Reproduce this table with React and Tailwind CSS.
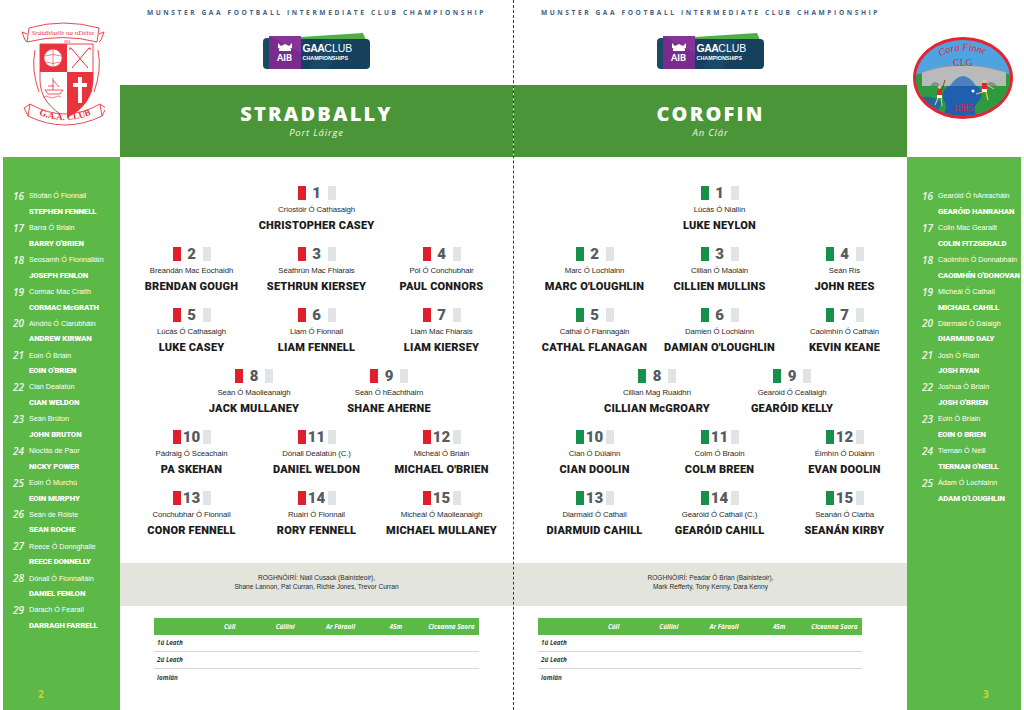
import React from 'react'

const stradbally = {
  name: 'STRADBALLY',
  county: 'Port Láirge',
  players: [
    [1, 'Críostóir Ó Cathasaigh', 'CHRISTOPHER CASEY'],
    [2, 'Breandán Mac Eochaidh', 'BRENDAN GOUGH'],
    [3, 'Séathrún Mac Fhiarais', 'SETHRUN KIERSEY'],
    [4, 'Pól Ó Conchubhair', 'PAUL CONNORS'],
    [5, 'Lúcás Ó Cathasaigh', 'LUKE CASEY'],
    [6, 'Liam Ó Fionnail', 'LIAM FENNELL'],
    [7, 'Liam Mac Fhiarais', 'LIAM KIERSEY'],
    [8, 'Seán Ó Maoileanaigh', 'JACK MULLANEY'],
    [9, 'Seán Ó hEachthairn', 'SHANE AHERNE'],
    [10, 'Pádraig Ó Sceachain', 'PA SKEHAN'],
    [11, 'Dónall Dealatún (C.)', 'DANIEL WELDON'],
    [12, 'Micheál Ó Briain', "MICHAEL O'BRIEN"],
    [13, 'Conchubhar Ó Fionnail', 'CONOR FENNELL'],
    [14, 'Ruairí Ó Fionnail', 'RORY FENNELL'],
    [15, 'Micheál Ó Maoileanaigh', 'MICHAEL MULLANEY'],
  ],
  subs: [
    [16, 'Stiofán Ó Fionnail', 'STEPHEN FENNELL'],
    [17, 'Barra Ó Briain', "BARRY O'BRIEN"],
    [18, 'Seosamh Ó Fionnalláin', 'JOSEPH FENLON'],
    [19, 'Cormac Mac Craith', 'CORMAC McGRATH'],
    [20, 'Aindriú Ó Ciarubháin', 'ANDREW KIRWAN'],
    [21, 'Eoin Ó Briain', "EOIN O'BRIEN"],
    [22, 'Cian Dealatún', 'CIAN WELDON'],
    [23, 'Seán Brúton', 'JOHN BRUTON'],
    [24, 'Nioclás de Paor', 'NICKY POWER'],
    [25, 'Eoin Ó Murchú', 'EOIN MURPHY'],
    [26, 'Seán de Róiste', 'SEAN ROCHE'],
    [27, 'Reece Ó Donnghaile', 'REECE DONNELLY'],
    [28, 'Dónall Ó Fionnalláin', 'DANIEL FENLON'],
    [29, 'Darach Ó Fearail', 'DARRAGH FARRELL'],
  ],
  selectors: ['ROGHNÓIRÍ: Niall Cusack  (Bainisteoir),', 'Shane Lannon, Pat Curran, Richie Jones, Trevor Curran'],
}

const corofin = {
  name: 'COROFIN',
  county: 'An Clár',
  players: [
    [1, 'Lúcás Ó Niallín', 'LUKE NEYLON'],
    [2, 'Marc Ó Lochlainn', "MARC O'LOUGHLIN"],
    [3, 'Cillian Ó Maoláin', 'CILLIEN MULLINS'],
    [4, 'Seán Rís', 'JOHN REES'],
    [5, 'Cathal Ó Flannagáin', 'CATHAL FLANAGAN'],
    [6, 'Damien Ó Lochlainn', "DAMIAN O'LOUGHLIN"],
    [7, 'Caoimhín Ó Catháin', 'KEVIN KEANE'],
    [8, 'Cillian Mag Ruaidhrí', 'CILLIAN McGROARY'],
    [9, 'Gearóid Ó Ceallaigh', 'GEARÓID KELLY'],
    [10, 'Cian Ó Dúlainn', 'CIAN DOOLIN'],
    [11, 'Colm Ó Braoin', 'COLM BREEN'],
    [12, 'Éimhín Ó Dúlainn', 'EVAN DOOLIN'],
    [13, 'Diarmaid Ó Cathail', 'DIARMUID CAHILL'],
    [14, 'Gearóid Ó Cathail (C.)', 'GEARÓID CAHILL'],
    [15, 'Seanán Ó Ciarba', 'SEANÁN KIRBY'],
  ],
  subs: [
    [16, 'Gearóid Ó hAnracháin', 'GEARÓID HANRAHAN'],
    [17, 'Colin Mac Gearailt', 'COLIN FITZGERALD'],
    [18, 'Caoimhín Ó Donnabháin', "CAOIMHÍN O'DONOVAN"],
    [19, 'Micheál Ó Cathail', 'MICHAEL CAHILL'],
    [20, 'Diarmaid Ó Dálaigh', 'DIARMUID DALY'],
    [21, 'Josh Ó Riain', 'JOSH RYAN'],
    [22, 'Joshua Ó Briain', "JOSH O'BRIEN"],
    [23, 'Eoin Ó Briain', 'EOIN O BRIEN'],
    [24, 'Tiernan Ó Néill', "TIERNAN O'NEILL"],
    [25, 'Ádam Ó Lochlainn', "ADAM O'LOUGHLIN"],
  ],
  selectors: ['ROGHNÓIRÍ: Peadar Ó Brian (Bainisteoir),', 'Mark Refferty, Tony Kenny, Dara Kenny'],
}

const statCols = ['Cúil', 'Cúilíní', 'Ar Fóraoil', '45m', 'Ciceanna Saora']
const statRows = ['1ú Leath', '2ú Leath', 'Iomlán']

const Player = ({ p, accent }) => (
  <div className="flex flex-col items-center">
    <div className="flex h-[14px] items-center">
      <span className={`h-[14px] w-[8px] ${accent}`} />
      <span className="w-[22px] text-center font-['Roboto',sans-serif] text-[15px] font-black leading-none text-[#565b60]">
        {p[0]}
      </span>
      <span className="h-[14px] w-[8px] bg-[#e2e3e5]" />
    </div>
    <div className="mt-[1px] h-[17px] whitespace-nowrap font-['Liberation_Sans',sans-serif] text-[7.8px] leading-[17px] tracking-[-0.1px] text-[#2a2a2a]">
      {p[1]}
    </div>
    <div className="h-[15px] whitespace-nowrap font-['Roboto',sans-serif] text-[11px] font-black leading-[15px] tracking-[0.2px] text-[#1c1c1c]">
      {p[2]}
    </div>
  </div>
)

const Lineup = ({ players, accent, pad }) => (
  <div className={`flex h-[406px] flex-col gap-[14px] pt-[29px] ${pad}`}>
    <div className="grid grid-cols-3">
      <div className="col-start-2">
        <Player p={players[0]} accent={accent} />
      </div>
    </div>
    {[1, 4].map((s) => (
      <div key={s} className="grid grid-cols-3">
        {players.slice(s, s + 3).map((p) => (
          <Player key={p[0]} p={p} accent={accent} />
        ))}
      </div>
    ))}
    <div className="grid grid-cols-6">
      <div className="col-span-2 col-start-2">
        <Player p={players[7]} accent={accent} />
      </div>
      <div className="col-span-2 pl-[20px]">
        <Player p={players[8]} accent={accent} />
      </div>
    </div>
    {[9, 12].map((s) => (
      <div key={s} className="grid grid-cols-3">
        {players.slice(s, s + 3).map((p) => (
          <Player key={p[0]} p={p} accent={accent} />
        ))}
      </div>
    ))}
  </div>
)

const Subs = ({ subs }) => (
  <div className="flex flex-col pt-[31.5px]">
    {subs.map((s) => (
      <div key={s[0]} className="h-[31.85px]">
        <div className="flex h-[15px] items-center">
          <span className="w-[16px] font-['Open_Sans',sans-serif] text-[10px] font-semibold italic leading-none text-white/90">
            {s[0]}
          </span>
          <span className="whitespace-nowrap font-['Liberation_Sans',sans-serif] text-[7.2px] leading-none text-white">
            {s[1]}
          </span>
        </div>
        <div className="flex h-[16.85px] items-center whitespace-nowrap pl-[16px] font-['Roboto',sans-serif] text-[7.8px] font-black leading-none tracking-[-0.1px] text-white">
          {s[2]}
        </div>
      </div>
    ))}
  </div>
)

const AibLogo = () => (
  <div className="relative h-[37px] w-[108px]">
    <svg width="108" height="37" viewBox="0 0 108 37" className="absolute left-0 top-0">
      <path d="M38 4 L100 0 L103 7 L38 8 Z" fill="#4fae48" />
      <rect x="30" y="6" width="77" height="30" rx="4" fill="#17405c" />
      <path d="M60 6 L80 6 L66 36 L46 36 Z" fill="#1d4d6b" opacity="0.7" />
      <rect x="0" y="5" width="12" height="31" rx="4" fill="#1b4a63" />
      <rect x="6" y="3" width="32" height="33" fill="#7a2b8e" />
      <path d="M6 3 L38 3 L38 20 Z" fill="#8d3a9e" opacity="0.6" />
      <path d="M15 10 L18 13 L22 11 L26 13 L29 10 L29 15 Q22 19 15 15 Z" fill="#fff" />
      <rect x="16" y="16" width="12" height="2" fill="#fff" />
    </svg>
    <span className="absolute left-[8px] top-[20px] w-[28px] text-center font-['Lato',sans-serif] text-[9px] font-black leading-none text-white">
      AIB
    </span>
    <span className="absolute left-[40px] top-[10px] font-['Liberation_Sans',sans-serif] text-[10.5px] leading-none text-white">
      <b className="tracking-[-0.5px]">GAA</b>CLUB
    </span>
    <span className="absolute left-[40px] top-[23px] font-['Liberation_Sans',sans-serif] text-[5.4px] font-bold leading-none text-white">
      CHAMPIONSHIPS
    </span>
  </div>
)

const StradballyCrest = () => (
  <svg width="84" height="108" viewBox="0 0 84 108">
    <g fill="none" stroke="#e8323c" strokeWidth="0.9">
      <path d="M8 8 Q42 -2 78 8 L76 22 Q42 13 6 22 Z" fill="#fff" />
      <path d="M6 14 L1 12 L4 20 L6 22" />
      <path d="M78 14 L83 12 L80 20 L78 22" />
      <path d="M19 24 L72 24 L72 60 Q72 84 46 98 Q19 84 19 60 Z" fill="#fff" />
      <path d="M14 30 Q10 50 18 72" />
      <path d="M77 30 Q81 50 73 72" />
      <path d="M9 84 Q44 104 79 84 L81 96 Q44 114 7 96 Z" fill="#fff" />
      <path d="M9 84 L3 88 L7 96" />
      <path d="M79 84 L85 88 L81 96" />
    </g>
    <text x="42" y="15" textAnchor="middle" fontSize="7" fill="#e8323c" fontFamily="Liberation Serif, serif" fontStyle="italic">
      Sráidbhaile na nDéise
    </text>
    <text x="46" y="23" textAnchor="middle" fontSize="3" fill="#e8323c" fontFamily="Liberation Sans, sans-serif">
      1884
    </text>
    <rect x="19" y="24" width="27" height="28" fill="#e8323c" />
    <path d="M46 52 L72 52 L72 60 Q72 84 46 98 Z" fill="#e8323c" />
    <circle cx="32" cy="38" r="9" fill="#fff" stroke="#e8323c" strokeWidth="0.6" />
    <path d="M24 36 Q32 33 40 36 M25 42 Q32 45 39 42 M32 29 L32 47" stroke="#e8323c" strokeWidth="0.6" fill="none" />
    <path d="M50 28 L67 48 M68 28 L51 48 M50 28 Q48 27 49 30 M68 28 Q70 27 69 30" stroke="#e8323c" strokeWidth="1" fill="none" />
    <path d="M24 70 L42 70 L39 74 L27 74 Z M32 58 L32 70 M32 60 L38 67 M27 66 L33 66" stroke="#e8323c" strokeWidth="0.8" fill="none" />
    <path d="M22 77 Q25 75 28 77 Q31 79 34 77 Q37 75 40 77" stroke="#e8323c" strokeWidth="0.6" fill="none" />
    <rect x="57" y="57" width="4" height="26" fill="#fff" />
    <rect x="52" y="63" width="14" height="4" fill="#fff" />
    <path id="gaaArc" d="M12 92 Q44 108 76 92" fill="none" />
    <text fontSize="9" fill="#e8323c" fontFamily="Liberation Serif, serif" fontWeight="bold">
      <textPath href="#gaaArc" startOffset="50%" textAnchor="middle">
        G.A.A. CLUB
      </textPath>
    </text>
  </svg>
)

const CorofinCrest = () => (
  <svg width="102" height="84" viewBox="0 0 102 84">
    <defs>
      <clipPath id="oval">
        <ellipse cx="51" cy="42" rx="47" ry="38" />
      </clipPath>
    </defs>
    <ellipse cx="51" cy="42" rx="50" ry="41" fill="#e32431" />
    <g clipPath="url(#oval)">
      <rect x="0" y="0" width="102" height="84" fill="#4fa3e0" />
      <path d="M0 40 Q15 34 26 42 L0 60 Z" fill="#2f9a3d" />
      <path d="M102 40 Q88 34 78 42 L102 62 Z" fill="#2f9a3d" />
      <path d="M0 46 L102 46 L102 84 L0 84 Z" fill="#2f9a3d" />
      <path d="M10 36 Q51 22 94 36 L94 50 L10 50 Z" fill="#b9babc" />
      <path d="M10 36 Q51 22 94 36" stroke="#8f9093" strokeWidth="0.8" fill="none" />
      <path d="M38 50 Q51 30 64 50 Z" fill="#4b7fc0" />
      <path d="M18 50 Q23 42 29 50 Z M73 50 Q79 42 85 50 Z" fill="#8c8d90" />
      <path d="M36 50 L66 50 Q74 60 64 68 Q60 76 68 84 L26 84 Q38 74 32 64 Q28 56 36 50 Z" fill="#1f5fae" />
      <path d="M0 62 Q20 58 30 66 L22 84 L0 84 Z" fill="#1f5fae" opacity="0.85" />
    </g>
    <g>
      <rect x="25" y="53" width="5" height="6" fill="#e32431" />
      <rect x="25" y="59" width="5" height="3" fill="#fff" />
      <circle cx="27.5" cy="51" r="1.8" fill="#f0c090" />
      <path d="M26 62 L23 69 M29 62 L30 70" stroke="#f0c090" strokeWidth="1.1" />
      <path d="M30 54 L33 44" stroke="#5b3a1a" strokeWidth="0.8" />
      <rect x="70" y="47" width="5" height="6" fill="#e32431" />
      <rect x="70" y="53" width="5" height="3" fill="#fff" />
      <circle cx="72.5" cy="45" r="1.8" fill="#f0c090" />
      <path d="M71 56 L64 58 M74 56 L76 64" stroke="#e8d020" strokeWidth="1.2" />
      <path d="M75 49 L82 53" stroke="#f0c090" strokeWidth="1" />
      <circle cx="61" cy="55" r="1.5" fill="#fff" />
    </g>
    <path id="coraArc" d="M14 32 Q44 0 90 26" fill="none" />
    <text fontSize="10" fill="#e32431" fontFamily="Liberation Serif, serif" fontStyle="italic">
      <textPath href="#coraArc" startOffset="50%" textAnchor="middle">
        Cora Finne
      </textPath>
    </text>
    <text x="51" y="30" textAnchor="middle" fontSize="10" fill="#e32431" fontFamily="Liberation Serif, serif">
      CLG
    </text>
    <text x="51" y="75" textAnchor="middle" fontSize="10" fill="#e32431" fontFamily="Liberation Serif, serif">
      1885
    </text>
  </svg>
)

const Header = ({ team }) => (
  <>
    <div className="flex h-[85px] flex-col items-center pt-[9px]">
      <div className="whitespace-nowrap font-['Open_Sans',sans-serif] text-[6.6px] font-bold leading-[8px] tracking-[2.6px] text-[#43627f]">
        MUNSTER GAA FOOTBALL INTERMEDIATE CLUB CHAMPIONSHIP
      </div>
      <div className="mt-[16px]">
        <AibLogo />
      </div>
    </div>
    <div className="flex h-[72px] flex-col items-center bg-[#4a9537] pt-[19px]">
      <div className="font-['Open_Sans',sans-serif] text-[20px] font-extrabold leading-[20px] tracking-[2.2px] text-white">
        {team.name}
      </div>
      <div className="mt-[3px] font-['Open_Sans',sans-serif] text-[9.5px] italic leading-[12px] tracking-[0.8px] text-[#eef5ea]">
        {team.county}
      </div>
    </div>
  </>
)

const Selectors = ({ lines }) => (
  <div className="flex h-[43px] flex-col items-center bg-[#e3e4dc] pt-[9.5px] font-['Liberation_Sans',sans-serif] text-[6.6px] leading-[9.5px] text-[#2b2b2b]">
    {lines.map((l) => (
      <div key={l}>{l}</div>
    ))}
  </div>
)

const StatsTable = ({ className }) => (
  <div className={`mt-[12px] font-['Open_Sans',sans-serif] text-[6.3px] font-bold italic ${className}`}>
    <div className="grid h-[17px] grid-cols-[48px_repeat(5,1fr)] items-center bg-[#5cb947] text-white">
      <span />
      {statCols.map((c) => (
        <span key={c} className="text-center">
          {c}
        </span>
      ))}
    </div>
    {statRows.map((r, i) => (
      <div
        key={r}
        className={`flex h-[17px] items-center pl-[3px] text-[#3a3a3a] ${i < 2 ? 'border-b border-[#d6d6d6]' : ''}`}
      >
        {r}
      </div>
    ))}
  </div>
)

export default function App() {
  return (
    <div className="flex h-[710px] w-[1024px] overflow-hidden bg-white">
      <div className="w-[3px]" />

      {/* left sidebar */}
      <div className="flex w-[117px] flex-col">
        <div className="flex h-[157px] justify-center pt-[20px] pl-[2px]">
          <StradballyCrest />
        </div>
        <div className="flex flex-1 flex-col bg-[#5cb947] pl-[10px]">
          <Subs subs={stradbally.subs} />
          <div className="mt-auto pb-[10px] pl-[25px] font-['Open_Sans',sans-serif] text-[10px] font-bold leading-[12px] text-[#d3cf32]">
            2
          </div>
        </div>
      </div>

      {/* left main */}
      <div className="flex w-[393px] flex-col">
        <Header team={stradbally} />
        <Lineup players={stradbally.players} accent="bg-[#e11f2c]" pad="px-[9px]" />
        <Selectors lines={stradbally.selectors} />
        <StatsTable className="ml-[34px] w-[325px]" />
      </div>

      <div className="w-px border-l border-dashed border-[#3a3a3a]" />

      {/* right main */}
      <div className="flex w-[393px] flex-col">
        <Header team={corofin} />
        <Lineup players={corofin.players} accent="bg-[#179049]" pad="pl-[18px]" />
        <Selectors lines={corofin.selectors} />
        <StatsTable className="ml-[24px] w-[324px]" />
      </div>

      {/* right sidebar */}
      <div className="flex w-[114px] flex-col">
        <div className="flex h-[157px] justify-center pt-[36px] pr-[2px]">
          <CorofinCrest />
        </div>
        <div className="flex flex-1 flex-col bg-[#5cb947] pl-[15px]">
          <Subs subs={corofin.subs} />
          <div className="mt-auto pb-[10px] pl-[61px] font-['Open_Sans',sans-serif] text-[10px] font-bold leading-[12px] text-[#d3cf32]">
            3
          </div>
        </div>
      </div>

      <div className="w-[3px]" />
    </div>
  )
}
